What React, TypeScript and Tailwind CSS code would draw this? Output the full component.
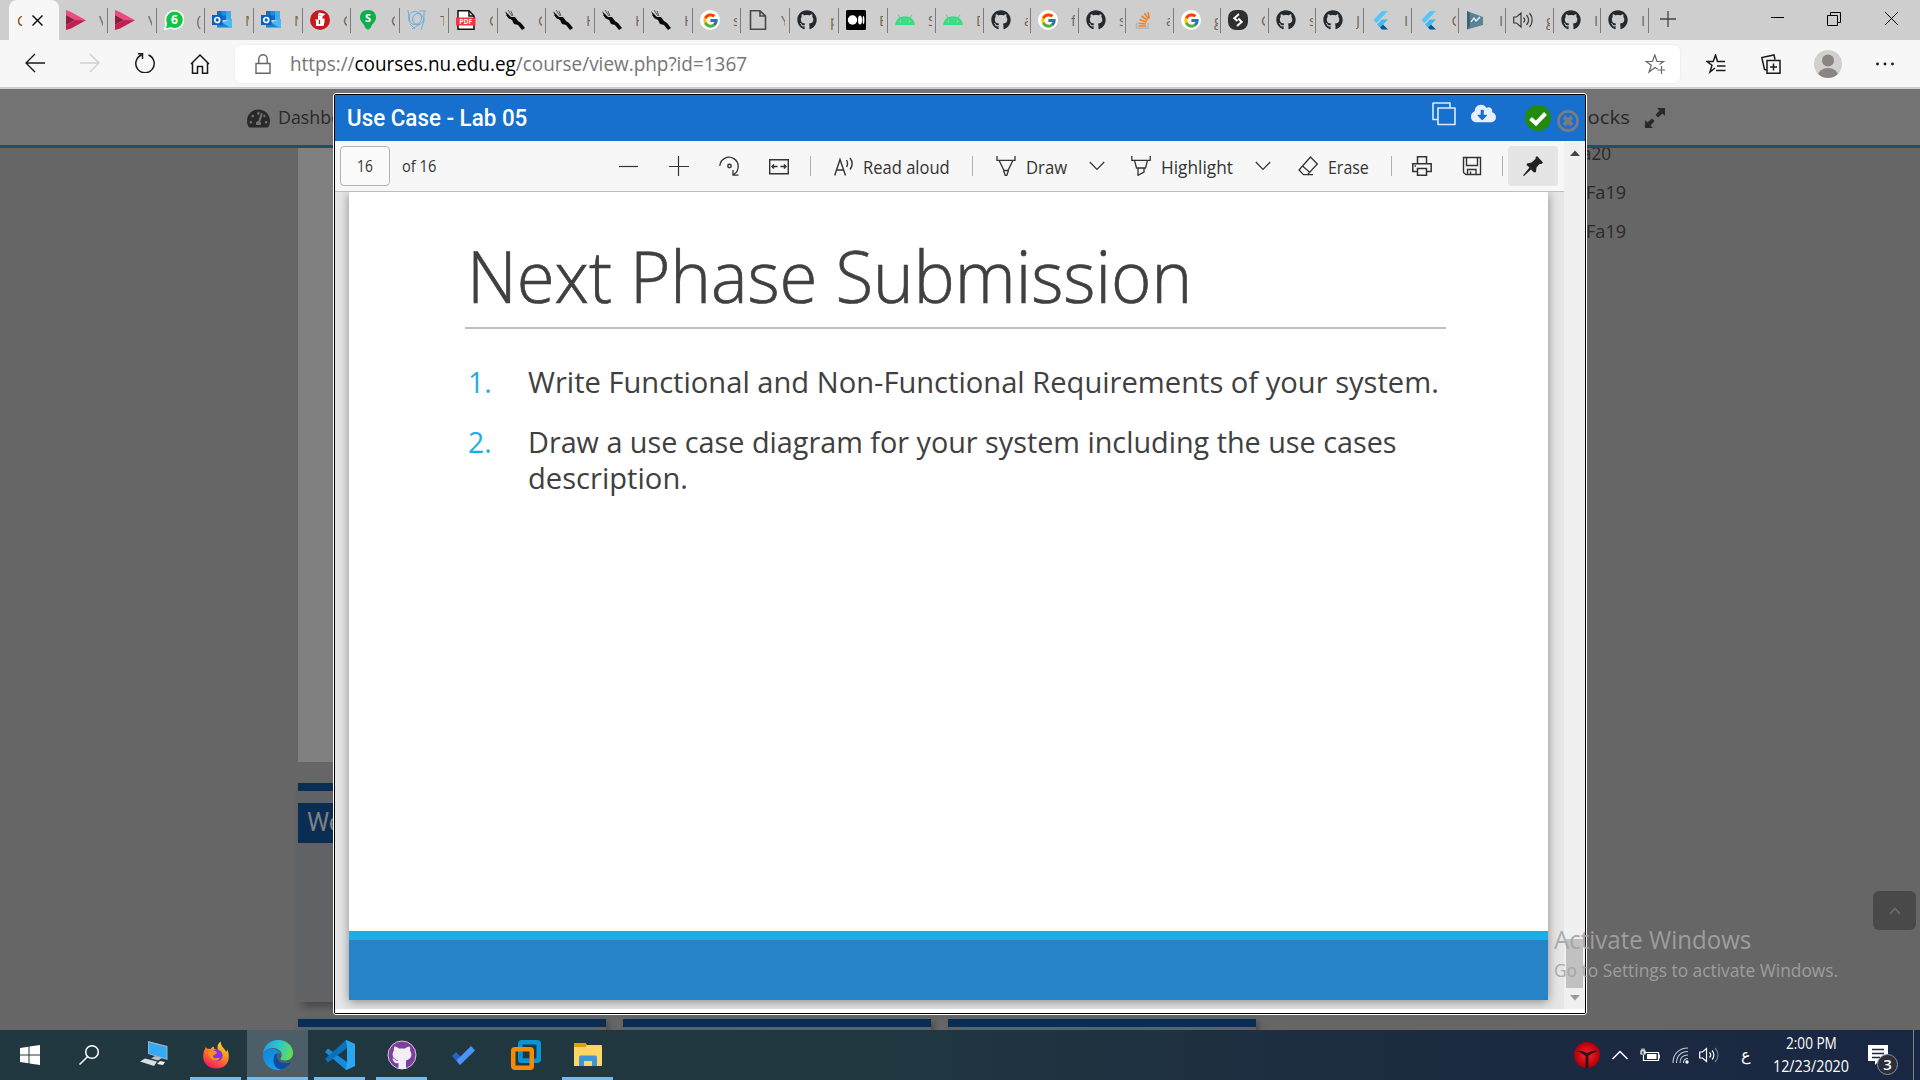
import React, { useLayoutEffect, useRef } from "react";
import { FaGithub, FaTachometerAlt, FaCloudDownloadAlt, FaStackOverflow } from "react-icons/fa";
import { FcGoogle } from "react-icons/fc";

/** One line of text, stretched or squeezed horizontally to a given width. */
function Fit({ width, className = "", children }: { width: number; className?: string; children: React.ReactNode }) {
  const ref = useRef<HTMLSpanElement>(null);
  useLayoutEffect(() => {
    const el = ref.current;
    if (el) el.style.transform = `scaleX(${width / el.offsetWidth})`;
  }, [width]);
  return (
    <div className={`shrink-0 whitespace-nowrap ${className}`} style={{ width }}>
      <span ref={ref} className="inline-block origin-left">{children}</span>
    </div>
  );
}

type SvgProps = { w?: number; h?: number; vb?: string; className?: string; children: React.ReactNode };
function Svg({ w = 20, h = 20, vb = "0 0 20 20", className = "", children }: SvgProps) {
  return (
    <svg width={w} height={h} viewBox={vb} className={`block shrink-0 ${className}`} fill="none" stroke="currentColor" strokeWidth={1.3}>
      {children}
    </svg>
  );
}

const icons: Record<string, React.ReactNode> = {
  pink: (
    <Svg><g stroke="none"><path d="M0 0L5 2L20 10.300L9 10L0 5Z" fill="#ea4c81" /><path d="M0 5L9 10L0 15Z" fill="#8e1c3c" /><path d="M9 10L20 10.300L5 18.500L0 20V15Z" fill="#c51f4f" /></g></Svg>
  ),
  whatsapp: (
    <Svg><circle cx="10.500" cy="9.800" r="9.800" fill="#fff" stroke="none" /><path d="M0 20L1.500 13L7 18.500Z" fill="#fff" stroke="none" /><circle cx="10.500" cy="9.800" r="8.300" fill="#13c443" stroke="none" /><path d="M2 18.300L3.300 13L7.500 17Z" fill="#13c443" stroke="none" /><text x="10.500" y="14.200" textAnchor="middle" fontSize="12" fontWeight="700" fontFamily="Open Sans" fill="#fff" stroke="none">6</text></Svg>
  ),
  outlook: (
    <Svg><g stroke="none"><path d="M5 1H18.500V10H5Z" fill="#0f6cc4" /><path d="M9.500 1H14V5.500H9.500Z" fill="#1490df" /><path d="M14 1H18.500V10H14Z" fill="#32b1f0" /><path d="M5 9L12.500 13L20 9V17.500H5Z" fill="#1784d8" /><path d="M20 9V17.500H18L10 12.500Z" fill="#43bdf5" /><path d="M0 5H10.500V15H0Z" fill="#0a62bd" /></g><circle cx="5.200" cy="10" r="2.500" stroke="#fff" strokeWidth="1.700" /></Svg>
  ),
  redcap: (
    <Svg><circle cx="10" cy="10" r="10" fill="#c8171d" stroke="none" /><path d="M9 2.500L15.500 4L13 6L7.500 5.500Z M8 6H13L12 8.500H14.500V12L13.500 16H6V11L5 9.500H8Z" fill="#fff" stroke="none" /><path d="M9.500 10V14" stroke="#c4161c" /></Svg>
  ),
  greens: (
    <Svg><path d="M10 0C4.500 0 2 3.500 2 7.500C2 12 6.500 14 7 17.500L10 20L13 17.500C13.500 14 18 12 18 7.500C18 3.500 15.500 0 10 0Z" fill="#0eae4e" stroke="none" /><text x="10" y="12" textAnchor="middle" fontSize="11" fontWeight="700" fontFamily="Open Sans" fill="#fff" stroke="none">S</text></Svg>
  ),
  cern: (
    <Svg className="text-[#6aaede]"><g strokeWidth="1"><circle cx="8" cy="8" r="6.500" /><circle cx="11" cy="9" r="5.500" /><path d="M1 0L3 12M3 14L8 19M12 1H19M17 1V11L14 20M5 19L13 14" /></g></Svg>
  ),
  pdf: (
    <Svg><path d="M2 .8H13L18 6V19.200H2Z" fill="#fff" stroke="#111" strokeWidth="1.500" /><path d="M13 1V6H18" stroke="#111" strokeWidth="1.500" /><rect x="0" y="7.500" width="19.500" height="8" fill="#f0383c" stroke="none" /><text x="9.800" y="13.900" textAnchor="middle" fontSize="6.800" fontWeight="700" fontFamily="Open Sans" fill="#fff" stroke="none">PDF</text></Svg>
  ),
  torch: (
    <Svg><path d="M0 1L6 7L10 7L13 11L16 13L20 18L17 20L13 15L9 14L7 10L3 8Z" fill="#090909" stroke="none" /><path d="M3 0L7 6M6 1L8 6M1 5L5 9" stroke="#222" strokeWidth=".7" /></Svg>
  ),
  google: <div className="flex h-5 w-5 items-center justify-center rounded-full bg-white"><FcGoogle size={17} /></div>,
  file: <Svg className="text-[#484848]"><path d="M2.500 .8H12L17.500 6V19.200H2.500ZM12 1V6H17.500" strokeWidth="1.600" /></Svg>,
  github: <FaGithub size={20} color="#24292e" className="shrink-0" />,
  medium: (
    <Svg><rect width="20" height="20" rx="1.500" fill="#000" stroke="none" /><g fill="#fff" stroke="none"><circle cx="6.500" cy="10" r="4.700" /><ellipse cx="14" cy="10" rx="2" ry="4.500" /><ellipse cx="17.500" cy="10" rx=".9" ry="4" /></g></Svg>
  ),
  android: (
    <Svg><path d="M0 15C.4 10 4 6.200 10 6.200S19.600 10 20 15Z" fill="#3ddc84" stroke="none" /><path d="M5 8L3 4.500M15 8L17 4.500" stroke="#3ddc84" strokeWidth="1" /><circle cx="5.500" cy="11.500" r=".8" fill="#cecece" stroke="none" /><circle cx="14.500" cy="11.500" r=".8" fill="#cecece" stroke="none" /></Svg>
  ),
  so: (
    <Svg><path d="M3.500 13V18.300H15V13" stroke="#b5b5b5" strokeWidth="1.500" /><g stroke="#f48024" strokeWidth="1.600"><path d="M5.500 16H13M5.600 13.200L13 14M6.500 9.500L13.500 12.200M8.500 6L14.500 10.500M11.500 3.200L15.500 9M15 2L16.300 8.500" /></g></Svg>
  ),
  darks: (
    <Svg><rect width="20" height="20" rx="8" fill="#2f2f2f" stroke="none" /><path d="M11 4L6.300 8.200L9.500 11M10.300 8.500L13.700 12L9 16" stroke="#fff" strokeWidth="2" /></Svg>
  ),
  flutter: (
    <Svg><path d="M11 1H17L5.500 13L2.500 10Z" fill="#54c5f8" stroke="none" /><path d="M11 9.500H17L9 17.500L6 14.500Z" fill="#45b6f2" stroke="none" /><path d="M9 17.500L12 14.500L17 19.500H11Z" fill="#01579b" stroke="none" /></Svg>
  ),
  play: (
    <Svg><path d="M1 1L17 7V15L1 19.500Z" fill="#5b8296" stroke="none" /><path d="M1 1L1 19.500L4 16V3Z" fill="#3f6273" stroke="none" /><path d="M5 12L8 8L10 11L14 7" stroke="#fff" strokeWidth="1.200" /></Svg>
  ),
  sound: (
    <Svg className="text-[#3a3a3a]"><path d="M.7 7H3.500L8 3V17L3.500 13H.7ZM10.500 7.500C12 9 12 11 10.500 12.500M13.500 5C16 8 16 12 13.500 15M16.500 3C20 7 20 13 16.500 17" strokeWidth="1.200" /></Svg>
  ),
};

const tabs: [number, string, string][] = [
  [59, "pink", "V"], [108, "pink", "V"], [156.500, "whatsapp", "("], [205, "outlook", "M"], [254, "outlook", "M"],
  [303, "redcap", "C"], [351, "greens", "C"], [400, "cern", "T"], [449, "pdf", "C"], [498, "torch", "C"],
  [546, "torch", "H"], [595, "torch", "H"], [644, "torch", "H"], [693, "google", "s"], [741, "file", "Y"],
  [790, "github", "p"], [839, "medium", "E"], [888, "android", "S"], [936, "android", "D"], [984, "github", "a"],
  [1031, "google", "f"], [1079, "github", "s"], [1126, "so", "a"], [1174, "google", "g"], [1221, "darks", "C"],
  [1269, "github", "s"], [1316, "github", "J"], [1364, "flutter", "I"], [1411.500, "flutter", "C"], [1459, "play", "I"],
  [1506, "sound", "g"], [1554, "github", "I"], [1601, "github", "I"], [1649, "", ""],
];

function TabStrip() {
  return (
    <div className="flex h-10 bg-[#cecece] pl-[9px] text-[15px] text-[#333]">
      <div className="flex h-10 w-[50px] shrink-0 items-center rounded-t-lg bg-[#f7f7f7] pl-2">
        <div className="w-[5px] overflow-hidden text-[#7a4a22]">C</div>
        <Svg w={11} h={11} vb="0 0 11 11" className="ml-[10px] text-black"><path d="M.5 .5L10.500 10.500M10.500 .5L.5 10.500" strokeWidth="1.400" /></Svg>
      </div>
      {tabs.slice(0, -1).map(([x, icon, label], i) => (
        <div key={x} className="flex shrink-0 items-center" style={{ width: tabs[i + 1][0] - x }}>
          <div className="ml-[7px] h-5 w-5 shrink-0">{icons[icon]}</div>
          <div className="ml-[13px] w-1 shrink-0 overflow-hidden text-[#75675a]">{label}</div>
          <div className="ml-auto h-[25px] w-px bg-[#7c7c7c]" />
        </div>
      ))}
      <Svg w={16} h={16} vb="0 0 16 16" className="ml-[11px] mt-[11px] text-[#444]"><path d="M0 8H16M8 0V16" strokeWidth="1.300" /></Svg>
      <Svg w={13} h={13} vb="0 0 13 13" className="ml-[95px] mt-3 text-black"><path d="M0 5.500H13" strokeWidth="1" /></Svg>
      <Svg w={14} h={14} vb="0 0 14 14" className="ml-[43px] mt-3 text-black"><path d="M.5 3.500H10.500V13.500H.5ZM3.500 3.500V.5H13.500V10.500H10.500" strokeWidth="1" /></Svg>
      <Svg w={13} h={13} vb="0 0 13 13" className="ml-[44px] mt-3 text-black"><path d="M0 0L13 13M13 0L0 13" strokeWidth="1" /></Svg>
    </div>
  );
}

function AddressRow() {
  return (
    <div className="flex h-[49px] items-start border-b-2 border-[#cdcdcd] bg-[#f7f7f7] text-[#1a1a1a]">
      <Svg className="ml-[25px] mt-[13px]"><path d="M20 10H1M10 1L1 10L10 19" strokeWidth="1.400" /></Svg>
      <Svg className="ml-[35px] mt-[13px] text-[#cfcfcf]"><path d="M0 10H19M10 1L19 10L10 19" strokeWidth="1.400" /></Svg>
      <Svg className="ml-[35px] mt-[13px]"><path d="M13.500 2A9.200 9.200 0 1 1 6.500 2M3 .8H7.500V6" strokeWidth="1.500" /></Svg>
      <Svg w={20} className="ml-[35px] mt-[14px]"><path d="M2.500 9V19.200H7.500V12.500H12.500V19.200H17.500V9M1 10L10 1L19 10" strokeWidth="1.500" /></Svg>
      <div className="ml-[25px] mt-[5px] flex h-[38px] w-[1445px] rounded-md bg-white shadow-[0_0_3px_rgba(0,0,0,0.08)]">
        <Svg w={16} h={20} vb="0 0 16 20" className="ml-5 mt-[9px] text-[#666]"><path d="M1 9.500H15V19.200H1ZM3.800 9.500V5A4.200 4.200 0 0 1 12.200 5V9.500" strokeWidth="1.400" /></Svg>
        <Fit width={457} className="ml-[19px] text-[20px] leading-[38px] text-[#757575]">
          https://<span className="text-black">courses.nu.edu.eg</span>/course/view.php?id=1367
        </Fit>
        <Svg className="ml-[898px] mt-[9px] text-[#666]"><path d="M12.500 15L10 13.400L4 18L6.300 11.200L1 7.500H7.500L9.800 1L12 7.500H18.500L14.500 10.500M16.500 12V20M12.500 16H20.500" strokeWidth="1.200" /></Svg>
      </div>
      <Svg className="ml-[26px] mt-[14px]"><path d="M9 14L4 18L6 11.200L1 7.500H7.200L9.500 1L11.500 7.500H19M11 12H19.500M10 16.500H19.500" strokeWidth="1.500" /></Svg>
      <Svg className="ml-[35px] mt-[14px]"><path d="M6 6.500H19V19.200H6ZM12.500 9.500V16.500M9 13H16M5.500 16L3.500 15.500L.8 3.500L13 .9L14 5.500" strokeWidth="1.500" /></Svg>
      <Svg w={28} h={28} vb="0 0 28 28" className="ml-[33px] mt-[10px]"><defs><clipPath id="avatar"><circle cx="14" cy="14" r="14" /></clipPath></defs><g clipPath="url(#avatar)" stroke="none"><rect width="28" height="28" fill="#d2d0cd" /><circle cx="14" cy="10.500" r="6" fill="#8b8581" /><ellipse cx="14" cy="25.500" rx="10" ry="7.500" fill="#8b8581" /></g></Svg>
      <Svg w={18} h={4} vb="0 0 18 4" className="ml-[34px] mt-[22px]"><g fill="#1a1a1a" stroke="none"><circle cx="1.500" cy="2" r="1.400" /><circle cx="9" cy="2" r="1.400" /><circle cx="16.500" cy="2" r="1.400" /></g></Svg>
    </div>
  );
}

function CoursePage() {
  return (
    <div className="flex h-[941px] flex-col overflow-hidden bg-[#666] text-[#292929]">
      <div className="flex h-[59px] shrink-0 items-start border-b-[3px] border-[#1f4f66] bg-[#737373] text-[19px] leading-[57px]">
        <FaTachometerAlt size={23} className="ml-[247px] mt-[18px] shrink-0" />
        <Fit width={92} className="ml-2">Dashboard</Fit>
        <Fit width={60} className="ml-[1200px]">blocks</Fit>
        <Svg className="ml-[15px] mt-[19px]"><path d="M12 0H20V8L17.500 5.500L13 9.500L10.500 7L14.500 2.500ZM8 20H0V12L2.500 14.500L7 10.500L9.500 13L5.500 17.500Z" fill="currentColor" stroke="none" /></Svg>
      </div>
      <div className="flex grow pl-[298px]">
        <div className="flex w-[960px] flex-col">
          <div className="h-[614px] shrink-0 bg-[#808080]" />
          <div className="mt-[21px] h-[219px] shrink-0 border-t-8 border-[#0a2d54] bg-[#606265] pt-3 shadow-[4px_5px_8px_rgba(0,0,0,0.3)]">
            <div className="h-10 bg-[#0a2d54] pl-[9px] font-[Roboto] text-[25px] leading-10 text-[#808080]">Week</div>
          </div>
          <div className="mt-[17px] flex gap-[17px]">
            {[0, 1, 2].map((i) => (
              <div key={i} className="h-[11px] w-[308px] border-t-8 border-[#0a2d54] bg-[#606265] shadow-[3px_3px_6px_rgba(0,0,0,0.3)]" />
            ))}
          </div>
        </div>
        <div className="ml-[315px] flex flex-col text-[19px] leading-[39px]">
          <Fit width={38} className="-mt-[14px] h-[39px] [clip-path:inset(14px_-4px_0_-4px)]">Fa20</Fit>
          <Fit width={40} className="ml-[13px]">Fa19</Fit>
          <Fit width={40} className="ml-[13px]">Fa19</Fit>
        </div>
      </div>
    </div>
  );
}

const Sep = ({ className }: { className: string }) => <div className={`h-5 w-px shrink-0 bg-[#b0b0b0] ${className}`} />;
const Chevron = ({ className }: { className: string }) => (
  <Svg w={16} h={10} vb="0 0 16 10" className={className}><path d="M.8 1L8 8.500L15.200 1" strokeWidth="1.200" /></Svg>
);

function PdfToolbar() {
  return (
    <div className="flex h-[51px] items-center border-b border-[#bdbdbd] bg-[#f7f7f7] text-[17.500px] text-[#333]">
      <div className="ml-[5px] flex h-10 w-[50px] shrink-0 items-center justify-center rounded-sm border border-[#b3b3b3] bg-[#fafafa]">
        <Fit width={16} className="mt-0.5 text-[15.500px]">16</Fit>
      </div>
      <Fit width={34} className="ml-3 mt-0.5 text-[15.500px]">of 16</Fit>
      <Svg className="ml-[183px]"><path d="M0 10.500H19" strokeWidth="1.200" /></Svg>
      <Svg className="ml-[30px]"><path d="M0 10.500H20M9.500 0V20" strokeWidth="1.200" /></Svg>
      <Svg className="ml-[30px]"><path d="M.8 10A9.200 9.200 0 1 1 14.500 18.500M14 14V19.200H19.500" /><circle cx="10.500" cy="10" r="1.700" strokeWidth="1.500" /></Svg>
      <Svg className="ml-[30px]"><path d="M.7 3.700H19.300V17.700H.7ZM3 10.500H8.500M5 8.500L3 10.500L5 12.500M11.500 10.500H17M15 8.500L17 10.500L15 12.500" strokeWidth="1.400" /></Svg>
      <Sep className="ml-[21px]" />
      <Svg className="ml-[23px]"><path d="M.7 19.500L6 3.500L11.500 19.500M2.700 14H9.500M12.500 4C14 6.500 14 8.500 12.500 11M16 2C19 6 19 9.500 16 13.500" strokeWidth="1.400" /></Svg>
      <Fit width={87} className="ml-[9px] mt-[3px]">Read aloud</Fit>
      <Sep className="ml-[22px]" />
      <Svg className="ml-[23px]"><path d="M1 0V4.300H19V0M3 4.300L8 14.500H12L17 4.300M7.500 14.500L9.300 19.500H10.700L12.500 14.500" /></Svg>
      <Fit width={41} className="ml-[10px] mt-[3px]">Draw</Fit>
      <Chevron className="ml-[22px]" />
      <Svg className="ml-[26px]"><path d="M.8 0V4.300H19.200V0M3.500 4.300L5.500 12H14.500L16.500 4.300M7 12V19.300L13 16V12" /></Svg>
      <Fit width={72} className="ml-[10px] mt-[3px]">Highlight</Fit>
      <Chevron className="ml-[22px]" />
      <Svg className="ml-[27px]"><path d="M12.500 1L19.300 8L9.500 18.700H5.500L1 14L12.500 1ZM4.500 10L12 16.500M9 18.700H15" /></Svg>
      <Fit width={41} className="ml-[10px] mt-[3px]">Erase</Fit>
      <Sep className="ml-[22px]" />
      <Svg className="ml-5"><path d="M5.500 7V.8H14.500V7M5 15.500H.8V7.700H19.200V15.500H15M5.500 12.500H14.500V19.200H5.500ZM2.500 10H4" strokeWidth="1.500" /></Svg>
      <Svg className="ml-[30px]"><path d="M1.500 1.500H18.500V18.500H4L1.500 16.500ZM4.500 2V9.500H15.500V2M5.500 18.500V13.500H14V18.500M8.500 15.500V18" strokeWidth="1.400" /></Svg>
      <Sep className="ml-5" />
      <div className="ml-[5px] flex h-10 w-[50px] shrink-0 items-center justify-center rounded-sm bg-[#e5e5e5]">
        <Svg><path d="M14 0L20 6.500L18.500 8L16.500 8L13.500 11.500L13 16L11 16.500L8 13.500L1 20L0 19.500L6.500 11.500L3.500 9L4 7.500L8.500 6.500L12.500 3L12.500 1.500Z" fill="#222" stroke="none" /></Svg>
      </div>
    </div>
  );
}

function Slide() {
  return (
    <div className="flex h-[808px] w-[1199px] flex-col bg-white font-['Open_Sans','Noto_Sans',sans-serif] text-[#404040] shadow-[0_2px_10px_rgba(0,0,0,0.4)]">
      <Fit width={725} className="ml-[118px] mt-[34px] h-[101px] text-[72px] font-light leading-[98px] [-webkit-text-stroke:0.7px_#404040]">Next Phase Submission</Fit>
      <div className="ml-[116px] h-0.5 w-[981px] bg-[#bfbfbf]" />
      <div className="ml-[119px] mt-[35px] text-[29.500px] leading-9">
        <div className="flex">
          <Fit width={24} className="text-[#1cade4]">1.</Fit>
          <Fit width={911} className="ml-9">Write Functional and Non-Functional Requirements of your system.</Fit>
        </div>
        <div className="mt-6 flex">
          <Fit width={24} className="text-[#1cade4]">2.</Fit>
          <div className="ml-9">
            <Fit width={869}>Draw a use case diagram for your system including the use cases</Fit>
            <Fit width={160}>description.</Fit>
          </div>
        </div>
      </div>
      <div className="mt-auto h-[69px] border-t-[9px] border-[#1cade4] bg-[#2683c6]" />
    </div>
  );
}

function Lightbox() {
  return (
    <div className="absolute left-[333px] top-[93px] h-[922px] w-[1254px] rounded-[3px] border border-white bg-black p-px">
      <div className="flex h-[918px] flex-col bg-white">
        <div className="flex h-[46px] shrink-0 bg-[#1770cd]">
          <Fit width={180} className="ml-3 mt-px font-[Roboto] text-[23px] font-medium leading-[46px] text-white">Use Case - Lab 05</Fit>
          <Svg w={24} h={24} vb="0 0 24 24" className="ml-[905px] mt-[7px] text-[#dcebfb]"><path d="M6 6H23V22.500H6ZM18 6V1H1V17.500H6" strokeWidth="1.600" strokeLinejoin="round" /></Svg>
          <FaCloudDownloadAlt size={25} className="ml-[15px] mt-[6px] shrink-0 text-[#e6f0fc]" />
          <Svg w={26} h={26} vb="0 0 26 26" className="ml-[29px] mt-[10px]"><circle cx="13" cy="13" r="13" fill="#228b0b" stroke="none" /><path d="M5.500 13.500L11 18.500L20.500 8.500" stroke="#fff" strokeWidth="4" /></Svg>
          <Svg w={22} h={22} vb="0 0 22 22" className="ml-[6px] mt-[15px] text-[#7c7c80]"><circle cx="11" cy="11" r="9.600" strokeWidth="2.600" /><path d="M7 7L15 15M15 7L7 15" strokeWidth="4" /></Svg>
        </div>
        <div className="flex h-[868px] shrink-0">
          <div className="flex w-[1229px] flex-col">
            <PdfToolbar />
            <div className="h-[817px] overflow-hidden bg-[#e6e6e6] pl-[14px]"><Slide /></div>
          </div>
          <div className="flex w-[21px] flex-col items-center bg-[#f0f0f0]">
            <Svg w={10} h={6} vb="0 0 10 6" className="mt-[9px]"><path d="M0 6L5 .5L10 6Z" fill="#444" stroke="none" /></Svg>
            <div className="mt-auto h-[49px] w-[17px] bg-[#c1c1c1]" />
            <Svg w={10} h={6} vb="0 0 10 6" className="mb-2 mt-[7px]"><path d="M0 0L5 5.500L10 0Z" fill="#999" stroke="none" /></Svg>
          </div>
        </div>
      </div>
    </div>
  );
}

const apps: { open?: boolean; active?: boolean; icon: React.ReactNode }[] = [
  { icon: <Svg><path d="M0 3L8.500 1.800V9.500H0ZM9.500 1.600L20 0V9.500H9.500ZM0 10.500H8.500V18.200L0 17ZM9.500 10.500H20V20L9.500 18.400Z" fill="#fff" stroke="none" /></Svg> },
  { icon: <Svg className="-ml-1.5 text-white"><circle cx="13" cy="7" r="6.300" strokeWidth="1.500" /><path d="M8.700 11.500L.5 19.500" strokeWidth="1.500" /></Svg> },
  { icon: <Svg w={28} h={26} vb="0 0 28 26" className="-mt-0.5"><g stroke="none"><path d="M8 0L27.500 5V19L8 13Z" fill="#9bb4c6" /><path d="M9 1.500L26.500 6V17.500L9 12.500Z" fill="#35aaf4" /><path d="M15 15L22 17L18 19.500L11 17.500Z" fill="#b4c2ca" /><path d="M5 17.500L17 20.500L14 25L0 20.500Z" fill="#d8dee2" /><path d="M20 20L25 21L23 24L17 23Z" fill="#eef1f3" /></g></Svg> },
  { open: true, icon: <Svg w={28} h={29} vb="0 0 30 30"><defs><linearGradient id="ff" x1=".8" y1="0" x2=".3" y2="1"><stop offset="0" stopColor="#ffe226" /><stop offset=".45" stopColor="#ff8a1e" /><stop offset="1" stopColor="#f5155f" /></linearGradient></defs><g stroke="none"><path d="M4 6C5 8 6 8 9 8C11 6 12 5 13 6C12 8 15 9 17 9C16 5 17 2 20 0C20 5 23 6 26 11C27 10 27 9 27 8C31 18 28 29 15 29C5 29 0 21 1.500 13C2 10 3 9 4 6Z" fill="url(#ff)" /><circle cx="15.500" cy="15" r="6.500" fill="#8437d8" /><path d="M6 12C11 8 15 10 16 12C14 15 11 14 12 17C14 19 17 17 19 18C17 22 9 22 6 12Z" fill="#ff8a1e" /></g></Svg> },
  { active: true, icon: <Svg w={30} h={30} vb="0 0 30 30"><defs><linearGradient id="eg" x1="0" y1=".4" x2="1" y2=".6"><stop offset="0" stopColor="#229de9" /><stop offset=".5" stopColor="#2fc7c9" /><stop offset="1" stopColor="#66e04a" /></linearGradient><linearGradient id="eb" x1="0" y1="0" x2=".7" y2="1"><stop offset="0" stopColor="#0f85dd" /><stop offset="1" stopColor="#1ba1e8" /></linearGradient></defs><g stroke="none"><path d="M0 14C1 5 7 0 15 0C24 0 30 6 30 13C30 18 26 20.500 22 20.500C19 20.500 17 19.500 17.500 18.500C21 14 17 8 10 8C5 8 1 11 0 14Z" fill="url(#eg)" /><path d="M0 15C1 10 6 8.500 10 9C15 10 17 12 18 14C13 11 10 16 12 21C14 26 20 27 27 23C24 28 20 30 15 30C6 30 0 23 0 15Z" fill="url(#eb)" /><path d="M12 14C8 22 12 29 18 29.500C22 29 26 26 28 22C24 24 18 24 15 20C13.500 18 13.500 16 14 14Z" fill="#0d4da1" /></g></Svg> },
  { open: true, icon: <Svg w={30} h={30} vb="0 0 30 30"><g stroke="none"><path d="M21 0L30 4V26L21 30L0 12L3 8.500L22 22V8Z" fill="#168bdc" /><path d="M22 8L3 22.500L0 19L21 0Z" fill="#0b71ba" /><path d="M21 0L30 4V26L21 30L22 22V8Z" fill="#2aa7f2" /></g></Svg> },
  { open: true, icon: <Svg w={30} h={30} vb="0 0 30 30"><circle cx="15" cy="15" r="14" fill="#7d3f9d" stroke="#d5c5df" strokeWidth="1" /><path d="M11.500 29V23C7 24 7 21 5 18.500C8 18 8 21.500 11.500 20.500C5 19 4.500 14 7 10.500C6.500 9 7 7.500 7.500 6.500C9.500 6.500 10.500 7.500 12 8.500H18C19.500 7.500 20.500 6.500 22.500 6.500C23 7.500 23.500 9 23 10.500C25.500 14 25 19 19 20.500V29Z" fill="#f3eef6" stroke="none" /></Svg> },
  { icon: <Svg w={23} h={19} vb="0 0 23 19"><path d="M0 10L4 6L11.500 13.500L8 19Z" fill="#2863c8" stroke="none" /><path d="M8 19L4.500 14.500L19 0L23 4.500Z" fill="#4b94fb" stroke="none" /></Svg> },
  { icon: <Svg w={30} h={30} vb="0 0 30 30"><rect x="9.250" y="2.250" width="18.500" height="18.500" rx="1.500" stroke="#0994d6" strokeWidth="4.500" /><rect x="2.250" y="9.250" width="18.500" height="18.500" rx="1.500" stroke="#f48a06" strokeWidth="4.500" /><path d="M9.250 12V19.500Q9.250 20.700 10.500 20.700H17.500" stroke="#0994d6" strokeWidth="4.500" /></Svg> },
  { open: true, icon: <Svg w={28} h={24} vb="0 0 28 24"><g stroke="none"><path d="M0 1Q0 0 1 0H11L13 2H27Q28 2 28 3V8H0Z" fill="#fcd462" /><path d="M0 1Q0 0 1 0H11Q13 0 12 4H0Z" fill="#e0a000" /><path d="M0 4H28V22Q28 23 27 23H0Z" fill="#fdd663" /><path d="M5 23V14Q5 12.500 6.500 12.500H21.500Q23 12.500 23 14V23H18V18H10V23Z" fill="#3f94d8" /></g></Svg> },
];

function Taskbar() {
  return (
    <div className="flex h-[50px] bg-[linear-gradient(90deg,#213841_0%,#203740_45%,#1c2b40_75%,#192743_100%)] text-white">
      {apps.map((a, i) => (
        <div key={i} className={`flex h-[50px] w-[61px] shrink-0 flex-col items-center justify-between ${i ? "ml-px" : "-ml-px"} ${a.active ? "bg-[#4c5f69]" : ""}`}>
          <div className="flex h-[50px] items-center">{a.icon}</div>
          {(a.open || a.active) && <div className={`-mt-[3px] h-[3px] shrink-0 bg-[#76b9ed] ${a.active ? "w-full" : "w-[51px]"}`} />}
        </div>
      ))}
      <div className="ml-auto flex w-[346px] shrink-0 items-center">
        <Svg w={26} h={26} vb="0 0 26 26"><defs><radialGradient id="ball"><stop offset="0" stopColor="#ff2430" /><stop offset="1" stopColor="#ad0008" /></radialGradient></defs><circle cx="13" cy="13" r="13" fill="url(#ball)" stroke="none" /><path d="M3 9C7 8 10 10 13 11C16 10 19 8 23 9C20 11 16 12 14.500 14V26H11.500V14C10 12 6 11 3 9Z" fill="#351316" stroke="none" /></Svg>
        <Svg w={16} h={10} vb="0 0 16 10" className="ml-3"><path d="M.5 9L8 1.500L15.500 9" strokeWidth="1.500" /></Svg>
        <Svg className="ml-3"><path d="M3.500 7.500H18.500V15.500H3.500V10M19.300 9.500V13.500M1 6H5V9H1ZM2 6V3.500M4 6V3.500" strokeWidth="1.200" /><rect x="7" y="9" width="9.500" height="5" fill="#fff" stroke="none" /></Svg>
        <Svg w={18} h={18} vb="0 0 18 18" className="ml-[12px]"><path d="M1 17C1 8 7 2 16 2M4.500 17C4.500 10 9 5.500 16 5.500M8 17C8 12 11 9 16 9M11.500 17C11.500 14 13 12.500 16 12.500" strokeWidth="1.100" stroke="#c5cbd3" /><circle cx="15" cy="16" r="1.700" fill="#fff" stroke="none" /></Svg>
        <Svg className="ml-[9px]"><path d="M.7 7H3.500L7.500 3.500V16.500L3.500 13H.7ZM10.500 7.500C12 9 12 11 10.500 12.500M13 5.500C15.500 8 15.500 12 13 14.500" strokeWidth="1.200" /><path d="M16 3C20 7 20 13 16 17" stroke="#77808f" strokeWidth="1.200" /></Svg>
        <div className="ml-[22px] w-[12px] font-['DejaVu_Sans'] text-[16px]">ع</div>
        <div className="ml-[20px] flex w-[76px] flex-col items-center text-[16px] leading-[23px]">
          <Fit width={51}>2:00 PM</Fit>
          <Fit width={76}>12/23/2020</Fit>
        </div>
        <div className="relative ml-[19px] h-5 w-5">
          <Svg w={20} h={20}><path d="M0 0H20V16H11L7 20V16H0Z" fill="#fff" stroke="none" /><path d="M4 4.500H16M4 8.500H16M4 12.500H12" stroke="#1a2842" strokeWidth="1.300" /></Svg>
          <div className="absolute left-[9px] top-[9px] flex h-[21px] w-[21px] items-center justify-center rounded-full border border-[#8b8f98] bg-[#2a2f3a] text-[15px] font-semibold">3</div>
        </div>
        <div className="ml-[25px] h-[50px] w-px bg-[#7c8290]" />
      </div>
    </div>
  );
}

export default function App() {
  return (
    <div className="relative h-[1080px] w-[1920px] overflow-hidden font-['Open_Sans','Noto_Sans',sans-serif]">
      <TabStrip />
      <AddressRow />
      <CoursePage />
      <Taskbar />
      <Lightbox />
      <div className="absolute left-[1873px] top-[891px] flex h-[39px] w-[43px] items-center justify-center rounded-md bg-[#494949] text-[#6b6b6b]">
        <Svg w={12} h={8} vb="0 0 12 8"><path d="M1 7L6 1.500L11 7" strokeWidth="1.800" /></Svg>
      </div>
      <div className="absolute left-[1554px] top-[921px] text-[#a4a4a4] opacity-90">
        <Fit width={197} className="text-[25.500px] leading-9">Activate Windows</Fit>
        <Fit width={284} className="text-[18.500px] leading-[25px]">Go to Settings to activate Windows.</Fit>
      </div>
    </div>
  );
}
